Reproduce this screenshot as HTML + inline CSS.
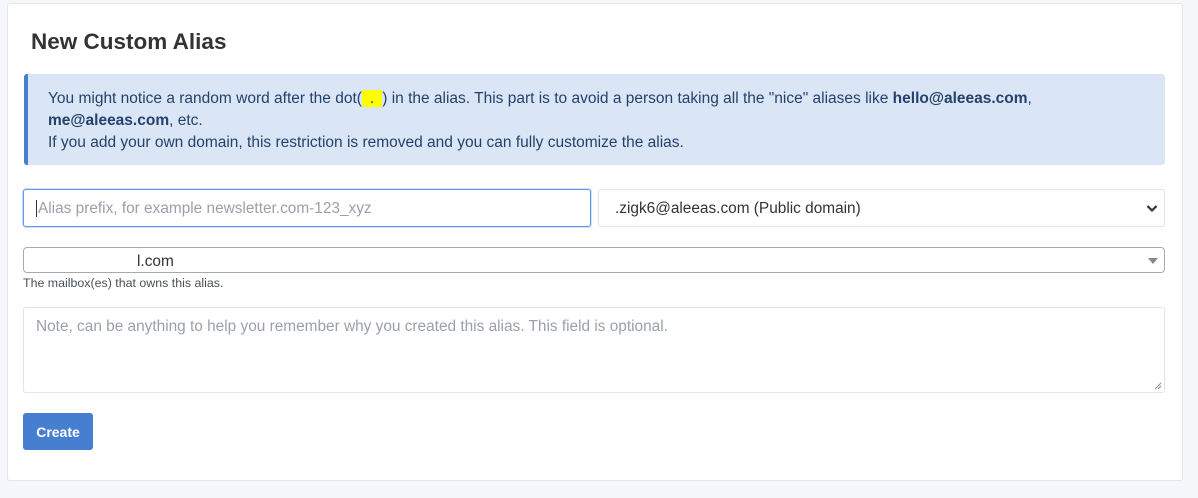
<!DOCTYPE html>
<html><head><style>
body{margin:0;background:#f5f7fb;font-family:"Liberation Sans",sans-serif;width:1198px;height:498px;overflow:hidden;position:relative}
.card{position:absolute;left:7px;top:3px;width:1174px;height:476px;background:#fff;border:1px solid #e3e6ec;border-radius:3px}
h1{position:absolute;left:23px;top:25px;margin:0;font-size:22.5px;font-weight:bold;color:#333}
.alert{position:absolute;left:16px;top:70px;width:1141px;height:91px;background:#dae5f5;border-left:4px solid #467fcf;border-radius:3px;color:#24426c;font-size:15.5px;line-height:22px;box-sizing:border-box;padding:14px 0 0 20px;white-space:nowrap}
.hl{background:#ff0;padding:0 8px;border-radius:2px}
.box{position:absolute;box-sizing:border-box;background:#fff;font-size:15.4px}
</style></head><body>
<div class="card">
<h1>New Custom Alias</h1>
<div class="alert">You might notice a random word after the dot(<span class="hl">.</span>) in the alias. This part is to avoid a person taking all the "nice" aliases like <b>hello@aleeas.com</b>,<br><b>me@aleeas.com</b>, etc.<br>If you add your own domain, this restriction is removed and you can fully customize the alias.</div>
<div class="box" style="left:15px;top:185px;width:568px;height:38px;border:1px solid #5a9ae8;border-radius:3px;box-shadow:0 0 0 1px #cfe0f7;color:#9aa0ac;padding:11px 12px;line-height:16px"><span style="border-left:1px solid #333;margin-right:1px"></span>Alias prefix, for example newsletter.com-123_xyz</div>
<div class="box" style="left:590px;top:185px;width:567px;height:38px;border:1px solid #e0e5ec;border-radius:3px;color:#333;padding:11px 16px;line-height:16px">.zigk6@aleeas.com (Public domain)<svg style="position:absolute;right:6px;top:14px" width="12" height="9" viewBox="0 0 12 9"><path d="M1.5 2l4.5 4.5L10.5 2" stroke="#333" stroke-width="2.2" fill="none"/></svg></div>
<div class="box" style="left:15px;top:243px;width:1142px;height:26px;border:1px solid #aaa;border-radius:4px;color:#333;padding:5px 0 0 113px;line-height:18px">l.com<svg style="position:absolute;right:6px;top:10px" width="10" height="6"><path d="M0 0h10L5 6z" fill="#888"/></svg></div>
<div style="position:absolute;left:15px;top:272px;font-size:12.4px;color:#495057">The mailbox(es) that owns this alias.</div>
<div class="box" style="left:15px;top:303px;width:1142px;height:86px;border:1px solid #e0e5ec;border-radius:3px;color:#9aa0ac;padding:11px 12px;line-height:16px">Note, can be anything to help you remember why you created this alias. This field is optional.<svg style="position:absolute;right:2px;bottom:2px" width="8" height="8"><path d="M1 7L7 1M4 7L7 4" stroke="#888"/></svg></div>
<div style="position:absolute;left:15px;top:409px;width:70px;height:37px;background:#467fcf;border-radius:3px;color:#fff;font-size:14px;font-weight:bold;text-align:center;line-height:38px">Create</div>
</div>
</body></html>
